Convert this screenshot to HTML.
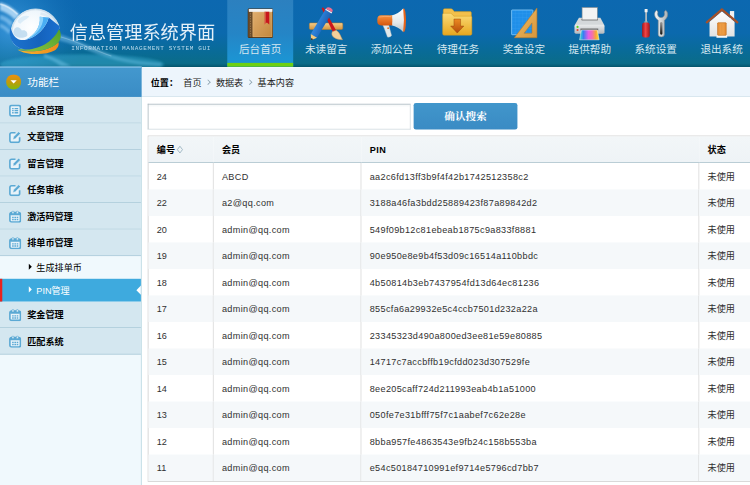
<!DOCTYPE html>
<html lang="zh-CN">
<head>
<meta charset="utf-8">
<title>信息管理系统界面</title>
<style>
*{margin:0;padding:0;box-sizing:content-box;}
html,body{width:750px;height:485px;overflow:hidden;background:#fff;}
body{font-family:"Liberation Sans","Noto Sans CJK SC",sans-serif;font-size:12px;color:#000;}
ul,li,dl,dd{list-style:none;}
#wrap{position:absolute;left:0;top:0;width:990px;height:641px;overflow:hidden;transform:scale(0.757576);transform-origin:0 0;background:#fff;}
/* header */
.header{position:absolute;left:0;top:0;width:990px;height:90px;background:#05566e linear-gradient(to bottom,#0c68b0 0%,#0b69ad 50%,#096b99 75%,#0a6c89 95%,#07607b 98%,#05566e 100%) no-repeat 0 0/100% 88px;overflow:hidden;}
.glow{position:absolute;left:0;top:0;width:290.3px;height:92.3px;}
.logo{position:absolute;left:0;top:0;width:92.4px;height:87.12px;}
.title{position:absolute;left:92px;top:26px;font-size:24px;line-height:34px;color:#e6f1f8;letter-spacing:0;white-space:nowrap;}
.subtitle{position:absolute;left:94px;top:59px;font-size:8px;line-height:9px;color:#b9d9ec;letter-spacing:0.79px;white-space:nowrap;font-family:"Liberation Mono","DejaVu Sans Mono",monospace;font-weight:normal;}
.nav{position:absolute;left:300px;top:0;height:88px;width:700px;}
.ico{position:absolute;top:5.28px;width:52.8px;height:52.8px;}
.nav li{float:left;width:87px;height:88.4px;text-align:center;position:relative;}
.nav li.selected{background:linear-gradient(to bottom,#2c80bf 0%,#2585c6 50%,#1a98d6 100%);}
.nav li.selected:after{content:"";position:absolute;left:0;bottom:0;width:87px;height:5px;background:#6ed012;}
.nav li h2{font-size:14px;font-weight:normal;color:#d6e8f1;line-height:20px;padding-top:55px;}
/* left */
.left{position:absolute;left:0;top:88.3px;width:187px;height:553px;background:#f0f9fd;}
.lefttop{height:38.7px;border-top:1px solid #56a9e2;background:linear-gradient(to bottom,#4398ce,#3a8cc5);color:#fff;font-size:14px;line-height:40px;}
.lefttop span{float:left;margin:9px 8px 0 8px;width:20px;height:21px;}
.lefttop span svg{display:block;}
.leftmenu{width:186px;border-right:1px solid #b7d5df;height:513px;}
.leftmenu dd .t{height:34px;line-height:37px;overflow:hidden;font-weight:bold;font-size:12px;background:#d4e7f0;border-bottom:1px solid #a9c9d8;}
.leftmenu dd .t svg{float:left;margin:9.7px 8px 0 12px;width:16px;height:16px;}
.menuson li{height:30px;line-height:32.5px;overflow:hidden;position:relative;font-size:12px;}
.menuson li cite{float:left;margin-left:32px;width:16px;height:16px;margin-top:7px;position:relative;}
.menuson li cite:after{content:"";position:absolute;left:6px;top:3px;border-left:4px solid #000;border-top:4px solid transparent;border-bottom:4px solid transparent;}
.menuson li.active{background:#3eaade;color:#fff;border-left:3px solid #e8221d;width:183px;}
.menuson li.active cite{margin-left:29px;}
.menuson li.active cite:after{border-left-color:#fff;}
.menuson li.active i{position:absolute;right:0;top:9px;border-right:6px solid #fff;border-top:6px solid transparent;border-bottom:6px solid transparent;}
/* right */
.right{position:absolute;left:187px;top:88px;width:820px;height:553px;background:#fff;}
.place{height:38px;background:#edf5fc;border-top:1px solid #fff;border-bottom:1px solid #d3e2ea;line-height:42px;white-space:nowrap;overflow:hidden;}
.place span{float:left;margin-left:12px;font-weight:bold;}
.place li{float:left;padding-left:7px;padding-right:12px;position:relative;color:#222;}
.place li:after{content:"";position:absolute;right:1px;top:17px;width:4px;height:4px;border-right:1px solid #8aa0ad;border-top:1px solid #8aa0ad;transform:rotate(45deg);}
.place li:last-child:after{display:none;}
.dfinput{position:absolute;left:8px;top:49px;width:345px;height:32px;border:1px solid;border-color:#a7b5bc #ced9df #ced9df #a7b5bc;background:linear-gradient(to bottom,#f3f6f7 0,#fff 4px);}
.btn{position:absolute;left:359px;top:48px;width:137px;height:35px;border-radius:3px;background:linear-gradient(to bottom,#4196cb,#3a8bc4);color:#fff;font-size:14px;font-weight:bold;text-align:center;line-height:37px;overflow:hidden;font-family:"Liberation Serif","Noto Serif CJK SC",serif;}
.tablelist{position:absolute;left:8px;top:91px;width:830px;border:1px solid #cbcbcb;border-collapse:separate;border-spacing:0;table-layout:fixed;}
.tablelist thead tr{background:linear-gradient(to bottom,#f2f6f8,#eef3f6);}
.tablelist th{height:32px;line-height:32px;padding:2px 0 0 0;border-bottom:1px solid #a8c0cb;text-indent:11px;text-align:left;font-weight:bold;font-size:12px;}
.tablelist td{height:34px;line-height:34px;padding:1px 0 0 0;text-indent:11px;border-right:1px solid #d6d6d6;font-size:12px;color:#303030;}
.tablelist tr.odd td{background:#f5f8fa;}
.sort{display:inline-block;width:5px;height:5px;border:1.3px solid #8faab8;transform:scale(.8,1.05) rotate(45deg);margin-left:3px;position:relative;top:-1px;}
.tablelist td.l{letter-spacing:.45px;}
</style>
</head>
<body>
<div id="wrap">
<div class="header">
  <svg class="glow" viewBox="0 0 1500 477" preserveAspectRatio="none">
    <defs>
      <radialGradient id="g1" cx="70" cy="200" r="520" gradientUnits="userSpaceOnUse"><stop offset="0" stop-color="#45a2e6" stop-opacity=".75"/><stop offset=".5" stop-color="#2b8bd0" stop-opacity=".4"/><stop offset="1" stop-color="#1768b0" stop-opacity="0"/></radialGradient>
      <filter id="bl" x="-20%" y="-50%" width="140%" height="200%"><feGaussianBlur stdDeviation="9"/></filter>
      <filter id="bl2" x="-20%" y="-50%" width="140%" height="200%"><feGaussianBlur stdDeviation="5"/></filter>
    </defs>
    <rect width="1500" height="477" fill="url(#g1)"/>
    <g filter="url(#bl)">
      <path d="M0 15C40 25 95 55 135 100L100 135C70 100 30 80 0 72Z" fill="#cfeaff" opacity=".75"/>
      <path d="M0 100C30 105 60 125 88 152L70 180C50 152 25 137 0 132Z" fill="#b5e0ff" opacity=".5"/>
      <path d="M0 160C20 165 50 185 72 212L60 230C40 207 20 192 0 187Z" fill="#b5e0ff" opacity=".45"/>
      <path d="M400 232C500 258 640 330 760 372C860 405 960 420 1100 430L1100 450C960 445 850 430 750 398C640 362 520 302 405 276Z" fill="#9fdcff" opacity=".38"/>
      <path d="M300 368C370 388 430 420 485 450L415 450C380 422 340 402 300 392Z" fill="#a5e0ff" opacity=".45"/>
    </g>
    <ellipse cx="560" cy="440" rx="560" ry="70" fill="#3fb0d8" opacity=".42" filter="url(#bl)"/>
    <g filter="url(#bl2)">
      <path d="M0 28C40 38 85 62 120 98" stroke="#ffffff" stroke-width="10" fill="none" opacity=".6"/>
      <path d="M410 250C520 280 650 345 760 382" stroke="#d8f2ff" stroke-width="6" fill="none" opacity=".4"/>
    </g>
  </svg>
  <svg class="logo" viewBox="0 0 514 485">
<defs>
<radialGradient id="lg1" cx=".42" cy=".38" r=".62"><stop offset="0" stop-color="#ffffff"/><stop offset=".6" stop-color="#eef6fc"/><stop offset="1" stop-color="#b5d6ee"/></radialGradient>
<linearGradient id="lg2" x1="0" y1="0" x2="1" y2="0"><stop offset="0" stop-color="#1d74cf"/><stop offset=".6" stop-color="#1563bd"/><stop offset="1" stop-color="#1a6fd0"/></linearGradient>
<linearGradient id="lg3" x1="0" y1="1" x2="1" y2="0"><stop offset="0" stop-color="#8cc63f"/><stop offset="1" stop-color="#4e9e2c"/></linearGradient>
<linearGradient id="lg4" x1="0" y1="0" x2="1" y2="0"><stop offset="0" stop-color="#f7b52c"/><stop offset="1" stop-color="#f08a1c"/></linearGradient>
</defs>
<clipPath id="gc"><path d="M0 0H514V200L440 195C420 270 330 352 215 363C120 372 50 290 78 200L0 200Z"/></clipPath><circle cx="261" cy="246" r="180" fill="url(#lg1)" stroke="#dfeaf2" stroke-width="6" clip-path="url(#gc)"/>
<g clip-path="url(#gc)"><circle cx="261" cy="246" r="174" fill="none" stroke="#9fb9cc" stroke-width="3" opacity=".7"/>
<path d="M105 215C120 190 150 200 160 225C185 215 205 235 200 262C175 285 130 280 110 262C95 250 95 230 105 215Z" fill="#bcd9ef" opacity=".85"/>
<path d="M130 150C150 120 190 110 215 120C205 140 170 150 150 175C140 170 130 165 130 150Z" fill="#d5e8f6" opacity=".8"/>
<path d="M300 90C330 95 360 110 380 130L372 150C350 125 320 112 296 108Z" fill="#dbe9f3" opacity=".9"/></g>
<path d="M130 365C180 402 330 412 400 372C428 352 434 330 430 310C350 382 220 388 130 365Z" fill="url(#lg4)"/>
<path d="M412 200L440 225C456 270 440 300 425 316C350 382 220 388 125 360C250 376 380 312 412 200Z" fill="url(#lg3)"/>
<path d="M78 200C50 290 120 372 215 363C330 352 420 270 440 195L358 128C340 200 270 275 190 292C140 302 95 280 78 200Z" fill="url(#lg2)"/>
<path d="M292 124L358 128C340 200 270 275 190 292C255 258 300 200 292 124Z" fill="#49aef3"/>
<path d="M292 124L318 126C318 200 262 262 190 292C255 258 300 200 292 124Z" fill="#8fd4fb"/>
</svg>
  <div class="title">信息管理系统界面</div>
  <div class="subtitle">INFORMATION MANAGEMENT SYSTEM GUI</div>
  <ul class="nav">
    <li class="selected"><h2>后台首页</h2></li>
    <li><h2>未读留言</h2></li>
    <li><h2>添加公告</h2></li>
    <li><h2>待理任务</h2></li>
    <li><h2>奖金设定</h2></li>
    <li><h2>提供帮助</h2></li>
    <li><h2>系统设置</h2></li>
    <li><h2>退出系统</h2></li>
  </ul>
<svg class="ico" style="left:316.80px" viewBox="0 0 485 485"><defs><linearGradient id="bk1" x1="0" y1="0" x2="1" y2="1"><stop offset="0" stop-color="#e0ad6e"/><stop offset="1" stop-color="#c2873c"/></linearGradient></defs>
<rect x="92" y="58" width="306" height="356" rx="14" fill="#4b3016"/>
<rect x="104" y="64" width="288" height="36" rx="6" fill="#f3f3f3"/>
<rect x="98" y="98" width="54" height="306" fill="#6b4b29"/>
<path d="M125 115V395" stroke="#ab8a5e" stroke-width="9" stroke-dasharray="14 16"/>
<rect x="150" y="98" width="240" height="306" fill="url(#bk1)"/>
<path d="M156 104H384V398H156Z" fill="none" stroke="#e9c58f" stroke-width="5" opacity=".7"/>
<path d="M295 96h58v156l-29-24-29 24z" fill="#c8161d"/>
<path d="M295 96h14v148l-14 8z" fill="#e8c47a" opacity=".55"/></svg>
<svg class="ico" style="left:403.92px" viewBox="0 0 485 485"><defs><linearGradient id="ru1" x1="0" y1="0" x2="0" y2="1"><stop offset="0" stop-color="#f5cf8d"/><stop offset="1" stop-color="#d6933a"/></linearGradient>
<linearGradient id="pc1" x1="0" y1="0" x2="1" y2="0.6"><stop offset="0" stop-color="#5aa6ee"/><stop offset=".5" stop-color="#2b7ed6"/><stop offset="1" stop-color="#144f9e"/></linearGradient></defs>
<rect x="40" y="232" width="405" height="80" rx="14" fill="url(#ru1)" stroke="#b97c2c" stroke-width="6"/>
<path d="M188 55Q200 38 216 50L366 326L326 346Z" fill="#c9161c"/>
<path d="M318 338C298 380 330 432 442 436C420 400 412 350 366 322Z" fill="#f1d09c" stroke="#c79a5c" stroke-width="6"/>
<path d="M307.800 117.400L232.200 72.600L57.200 367.600L132.800 412.400Z" fill="url(#pc1)"/>
<path d="M57.200 367.600L132.800 412.400L60 442Z" fill="#f3c97e"/>
<path d="M60 442L64 414L88 429Z" fill="#222"/>
<path d="M232.200 72.600L307.800 117.400L316 104L240 59Z" fill="#f4f4f4"/>
<path d="M240 59L316 104Q336 74 300 52Q264 32 240 59Z" fill="#ee6c8e"/></svg>
<svg class="ico" style="left:491.04px" viewBox="0 0 485 485"><defs><linearGradient id="mg1" x1="0" y1="0" x2="0" y2="1"><stop offset="0" stop-color="#f8923f"/><stop offset="1" stop-color="#d4560f"/></linearGradient>
<linearGradient id="mg2" x1="0" y1="0" x2="0" y2="1"><stop offset="0" stop-color="#ffffff"/><stop offset=".6" stop-color="#e3e8ea"/><stop offset="1" stop-color="#b9c2c6"/></linearGradient></defs>
<path d="M125 245H200L238 385Q225 408 188 404L150 300Z" fill="#e2e8ea" stroke="#b8c2c6" stroke-width="5"/>
<circle cx="196" cy="296" r="11" fill="#e9691c"/>
<ellipse cx="386" cy="200" rx="26" ry="146" fill="#e8641a"/>
<path d="M235 142Q320 125 378 58Q398 200 378 342Q320 278 235 260Z" fill="url(#mg2)"/>
<rect x="65" y="140" width="180" height="122" rx="46" fill="url(#mg1)"/>
<rect x="215" y="140" width="30" height="122" fill="url(#mg1)"/>
<path d="M90 160Q150 148 235 156" stroke="#ffc79a" stroke-width="8" fill="none" opacity=".7"/></svg>
<svg class="ico" style="left:578.16px" viewBox="0 0 485 485"><defs><linearGradient id="fd1" x1="0" y1="0" x2="0" y2="1"><stop offset="0" stop-color="#fadb78"/><stop offset="1" stop-color="#e7a71f"/></linearGradient>
<linearGradient id="fd2" x1="0" y1="0" x2="0" y2="1"><stop offset="0" stop-color="#ec8a22"/><stop offset="1" stop-color="#b44c0a"/></linearGradient></defs>
<path d="M65 78Q65 60 82 60H160Q172 60 180 70L198 95H392Q406 95 406 110V200H65Z" fill="#f2c04c" stroke="#c8921a" stroke-width="6"/>
<path d="M58 130Q58 115 74 115H150Q162 115 170 124L194 150H398Q412 150 412 165V364Q412 380 396 380H74Q58 380 58 364Z" fill="url(#fd1)" stroke="#d19c1e" stroke-width="6"/>
<path d="M195 185H275V270H315L235 355L155 270H195Z" fill="url(#fd2)" stroke="#8c3c08" stroke-width="5"/></svg>
<svg class="ico" style="left:665.28px" viewBox="0 0 485 485"><defs><linearGradient id="tr1" x1="0" y1="0" x2="1" y2="1"><stop offset="0" stop-color="#efbd68"/><stop offset="1" stop-color="#d8963a"/></linearGradient></defs>
<rect x="95" y="75" width="258" height="300" rx="6" fill="#1f8fe9" stroke="#8fd2ff" stroke-width="9"/>
<path d="M140 80V370M185 80V370M230 80V370M275 80V370M320 80V370M100 120H348M100 165H348M100 210H348M100 255H348M100 300H348M100 345H348" stroke="#6ec0ff" stroke-width="2" opacity=".6"/>
<path d="M402 52V412H128ZM342 232V357H246Z" fill="url(#tr1)" fill-rule="evenodd" stroke="#b77826" stroke-width="7" stroke-linejoin="round"/></svg>
<svg class="ico" style="left:752.40px" viewBox="0 0 485 485"><defs><linearGradient id="pr1" x1="0" y1="0" x2="0" y2="1"><stop offset="0" stop-color="#e9ebec"/><stop offset="1" stop-color="#b4b9bc"/></linearGradient>
<linearGradient id="pr2" x1="0" y1="0" x2="1" y2="0"><stop offset="0" stop-color="#2fe4cf"/><stop offset=".2" stop-color="#3b7df2"/><stop offset=".45" stop-color="#e35fe9"/><stop offset=".65" stop-color="#f471ad"/><stop offset=".82" stop-color="#f8a23e"/><stop offset="1" stop-color="#f5e42c"/></linearGradient></defs>
<path d="M112 170H372L422 264H58Z" fill="#d4d8da"/>
<rect x="145" y="184" width="196" height="16" fill="#4c4c4c"/>
<rect x="150" y="45" width="185" height="150" fill="#f3f3f3" stroke="#8b8b8b" stroke-width="7"/>
<rect x="58" y="255" width="364" height="108" rx="18" fill="url(#pr1)"/>
<circle cx="95" cy="280" r="13" fill="#5bd21e"/><circle cx="95" cy="318" r="13" fill="#e5402a"/>
<rect x="130" y="300" width="216" height="24" fill="#6a6a6a"/>
<path d="M142 318H335L357 437H120Z" fill="url(#pr2)" stroke="#f4f4f4" stroke-width="6"/></svg>
<svg class="ico" style="left:839.52px" viewBox="0 0 485 485"><defs><linearGradient id="sd1" x1="0" y1="0" x2="1" y2="0"><stop offset="0" stop-color="#a81418"/><stop offset=".45" stop-color="#ee4446"/><stop offset="1" stop-color="#a81418"/></linearGradient>
<linearGradient id="wr1" x1="0" y1="0" x2="1" y2="0"><stop offset="0" stop-color="#f6f8f9"/><stop offset="1" stop-color="#aab1b5"/></linearGradient>
<linearGradient id="wr2" x1="0" y1="0" x2="0" y2="1"><stop offset="0" stop-color="#9a9a9a"/><stop offset="1" stop-color="#111"/></linearGradient></defs>
<rect x="108" y="95" width="20" height="135" fill="#b9bec2"/>
<rect x="100" y="62" width="36" height="42" rx="4" fill="#f3f3f3"/>
<rect x="92" y="214" width="50" height="16" rx="5" fill="#70bcbc"/>
<rect x="70" y="228" width="92" height="180" rx="28" fill="url(#sd1)"/>
<path d="M245 78C213 100 208 160 265 200V370Q265 402 302 402Q340 402 340 370V200C394 160 387 100 355 78L338 100C350 130 335 167 300 167C265 167 250 130 262 100Z" fill="url(#wr1)" stroke="#7f878b" stroke-width="7" stroke-linejoin="round"/>
<rect x="288" y="222" width="28" height="152" rx="14" fill="url(#wr2)"/></svg>
<svg class="ico" style="left:926.64px" viewBox="0 0 485 485"><defs><linearGradient id="hs1" x1="0" y1="0" x2="0" y2="1"><stop offset="0" stop-color="#ffffff"/><stop offset="1" stop-color="#e2e2e2"/></linearGradient>
<linearGradient id="hs2" x1="0" y1="0" x2="1" y2="0"><stop offset="0" stop-color="#e48a30"/><stop offset=".5" stop-color="#f3a650"/><stop offset="1" stop-color="#e48a30"/></linearGradient></defs>
<rect x="335" y="88" width="52" height="100" fill="#f1f1f1"/>
<path d="M238 90L88 218V396H392V218Z" fill="url(#hs1)"/>
<path d="M55 225L238 70L425 225" fill="none" stroke="#a4512b" stroke-width="27" stroke-linecap="round" stroke-linejoin="miter"/>
<rect x="172" y="380" width="130" height="32" fill="#f8f8f8"/>
<rect x="186" y="230" width="104" height="152" rx="6" fill="url(#hs2)" stroke="#c06c1c" stroke-width="8"/>
<path d="M238 240V372" stroke="#d07a24" stroke-width="5"/></svg>
</div>
<div class="left">
  <div class="lefttop"><span><svg viewBox="0 0 20 21" width="20" height="21"><defs><linearGradient id="lt1" x1="0" y1="0" x2="0" y2="1"><stop offset="0" stop-color="#f0900c"/><stop offset=".5" stop-color="#c29a0c"/><stop offset="1" stop-color="#7fbb0e"/></linearGradient></defs><circle cx="10" cy="10.2" r="10" fill="url(#lt1)"/><path d="M5.900 8H14.100L10 12.300Z" fill="#fff"/></svg></span>功能栏</div>
  <dl class="leftmenu">
    <dd><div class="t"><svg viewBox="0 0 16 16"><rect x="1" y="1" width="14" height="14" rx="2.6" fill="#e8f3f9" stroke="#5ba9d4" stroke-width="2.2"/><path d="M4 4.4h2v1.7H4zM7.2 4.4h4.8v1.7H7.2zM4 7.2h2v1.7H4zM7.2 7.2h4.8v1.7H7.2zM4 10h2v1.7H4zM7.2 10h4.8v1.7H7.2z" fill="#5ba9d4"/></svg>会员管理</div></dd>
    <dd><div class="t"><svg viewBox="0 0 16 16"><path d="M13.9 8.2V12.6A2.4 2.4 0 0 1 11.5 15H3.4A2.4 2.4 0 0 1 1 12.600V4.6A2.4 2.4 0 0 1 3.4 2.2H8.5" fill="#e8f3f9" stroke="#5ba9d4" stroke-width="2.2"/><path d="M12.6 0.8L15 3.200L8.2 10L5 11.2L6 7.600Z" fill="#5ba9d4" stroke="#e8f3f9" stroke-width=".6"/></svg>文章管理</div></dd>
    <dd><div class="t"><svg viewBox="0 0 16 16"><path d="M13.9 8.2V12.6A2.4 2.4 0 0 1 11.5 15H3.4A2.4 2.4 0 0 1 1 12.600V4.6A2.4 2.4 0 0 1 3.4 2.2H8.5" fill="#e8f3f9" stroke="#5ba9d4" stroke-width="2.2"/><path d="M12.6 0.8L15 3.200L8.2 10L5 11.2L6 7.600Z" fill="#5ba9d4" stroke="#e8f3f9" stroke-width=".6"/></svg>留言管理</div></dd>
    <dd><div class="t"><svg viewBox="0 0 16 16"><path d="M13.9 8.2V12.6A2.4 2.4 0 0 1 11.5 15H3.4A2.4 2.4 0 0 1 1 12.600V4.6A2.4 2.4 0 0 1 3.4 2.2H8.5" fill="#e8f3f9" stroke="#5ba9d4" stroke-width="2.2"/><path d="M12.6 0.8L15 3.200L8.2 10L5 11.2L6 7.600Z" fill="#5ba9d4" stroke="#e8f3f9" stroke-width=".6"/></svg>任务审核</div></dd>
    <dd><div class="t"><svg viewBox="0 0 16 16"><rect x="1" y="2.6" width="14" height="12.400" rx="2.4" fill="#e8f3f9" stroke="#5ba9d4" stroke-width="2.2"/><rect x="1" y="2.600" width="14" height="3.6" rx="1.5" fill="#5ba9d4"/><rect x="3.8" y="0.6" width="2.6" height="3.400" rx="1.2" fill="#e8f3f9" stroke="#5ba9d4" stroke-width=".9"/><rect x="9.6" y="0.6" width="2.6" height="3.400" rx="1.2" fill="#e8f3f9" stroke="#5ba9d4" stroke-width=".9"/><path d="M4 8h2.100v1.800H4zM7 8h2.100v1.800H7zM10 8h2.100v1.800H10zM4 10.800h2.100v1.800H4zM7 10.800h2.100v1.800H7zM10 10.800h2.100v1.800H10z" fill="#5ba9d4"/></svg>激活码管理</div></dd>
    <dd><div class="t"><svg viewBox="0 0 16 16"><rect x="1" y="2.6" width="14" height="12.400" rx="2.4" fill="#e8f3f9" stroke="#5ba9d4" stroke-width="2.2"/><rect x="1" y="2.600" width="14" height="3.6" rx="1.5" fill="#5ba9d4"/><rect x="3.8" y="0.6" width="2.6" height="3.400" rx="1.2" fill="#e8f3f9" stroke="#5ba9d4" stroke-width=".9"/><rect x="9.6" y="0.6" width="2.6" height="3.400" rx="1.2" fill="#e8f3f9" stroke="#5ba9d4" stroke-width=".9"/><path d="M4 8h2.100v1.800H4zM7 8h2.100v1.800H7zM10 8h2.100v1.800H10zM4 10.800h2.100v1.800H4zM7 10.800h2.100v1.800H7zM10 10.800h2.100v1.800H10z" fill="#5ba9d4"/></svg>排单币管理</div>
      <ul class="menuson">
        <li><cite></cite>生成排单币</li>
        <li class="active"><cite></cite>PIN管理<i></i></li>
      </ul>
    </dd>
    <dd><div class="t"><svg viewBox="0 0 16 16"><rect x="1" y="2.6" width="14" height="12.400" rx="2.4" fill="#e8f3f9" stroke="#5ba9d4" stroke-width="2.2"/><rect x="1" y="2.600" width="14" height="3.6" rx="1.5" fill="#5ba9d4"/><rect x="3.8" y="0.6" width="2.6" height="3.400" rx="1.2" fill="#e8f3f9" stroke="#5ba9d4" stroke-width=".9"/><rect x="9.6" y="0.6" width="2.6" height="3.400" rx="1.2" fill="#e8f3f9" stroke="#5ba9d4" stroke-width=".9"/><path d="M4 8h2.100v1.800H4zM7 8h2.100v1.800H7zM10 8h2.100v1.800H10zM4 10.800h2.100v1.800H4zM7 10.800h2.100v1.800H7zM10 10.800h2.100v1.800H10z" fill="#5ba9d4"/></svg>奖金管理</div></dd>
    <dd><div class="t"><svg viewBox="0 0 16 16"><rect x="1" y="2.6" width="14" height="12.400" rx="2.4" fill="#e8f3f9" stroke="#5ba9d4" stroke-width="2.2"/><rect x="1" y="2.600" width="14" height="3.6" rx="1.5" fill="#5ba9d4"/><rect x="3.8" y="0.6" width="2.6" height="3.400" rx="1.2" fill="#e8f3f9" stroke="#5ba9d4" stroke-width=".9"/><rect x="9.6" y="0.6" width="2.6" height="3.400" rx="1.2" fill="#e8f3f9" stroke="#5ba9d4" stroke-width=".9"/><path d="M4 8h2.100v1.800H4zM7 8h2.100v1.800H7zM10 8h2.100v1.800H10zM4 10.800h2.100v1.800H4zM7 10.800h2.100v1.800H7zM10 10.800h2.100v1.800H10z" fill="#5ba9d4"/></svg>匹配系统</div></dd>
  </dl>
</div>
<div class="right">
  <div class="place"><span>位置：</span><ul><li>首页</li><li>数据表</li><li>基本内容</li></ul></div>
  <div class="dfinput"></div>
  <div class="btn">确认搜索</div>
  <table class="tablelist">
    <colgroup><col style="width:86px"><col style="width:195px"><col style="width:446px"><col></colgroup>
    <thead><tr><th>编号<i class="sort"></i></th><th>会员</th><th style="letter-spacing:.6px">PIN</th><th>状态</th></tr></thead>
    <tbody>
      <tr><td>24</td><td class="l">ABCD</td><td class="l">aa2c6fd13ff3b9f4f42b1742512358c2</td><td>未使用</td></tr>
      <tr class="odd"><td>22</td><td class="l">a2@qq.com</td><td class="l">3188a46fa3bdd25889423f87a89842d2</td><td>未使用</td></tr>
      <tr><td>20</td><td class="l">admin@qq.com</td><td class="l">549f09b12c81ebeab1875c9a833f8881</td><td>未使用</td></tr>
      <tr class="odd"><td>19</td><td class="l">admin@qq.com</td><td class="l">90e950e8e9b4f53d09c16514a110bbdc</td><td>未使用</td></tr>
      <tr><td>18</td><td class="l">admin@qq.com</td><td class="l">4b50814b3eb7437954fd13d64ec81236</td><td>未使用</td></tr>
      <tr class="odd"><td>17</td><td class="l">admin@qq.com</td><td class="l">855cfa6a29932e5c4ccb7501d232a22a</td><td>未使用</td></tr>
      <tr><td>16</td><td class="l">admin@qq.com</td><td class="l">23345323d490a800ed3ee81e59e80885</td><td>未使用</td></tr>
      <tr class="odd"><td>15</td><td class="l">admin@qq.com</td><td class="l">14717c7accbffb19cfdd023d307529fe</td><td>未使用</td></tr>
      <tr><td>14</td><td class="l">admin@qq.com</td><td class="l">8ee205caff724d211993eab4b1a51000</td><td>未使用</td></tr>
      <tr class="odd"><td>13</td><td class="l">admin@qq.com</td><td class="l">050fe7e31bfff75f7c1aabef7c62e28e</td><td>未使用</td></tr>
      <tr><td>12</td><td class="l">admin@qq.com</td><td class="l">8bba957fe4863543e9fb24c158b553ba</td><td>未使用</td></tr>
      <tr class="odd"><td>11</td><td class="l">admin@qq.com</td><td class="l">e54c50184710991ef9714e5796cd7bb7</td><td>未使用</td></tr>
    </tbody>
  </table>
</div>
</div>
</body>
</html>
